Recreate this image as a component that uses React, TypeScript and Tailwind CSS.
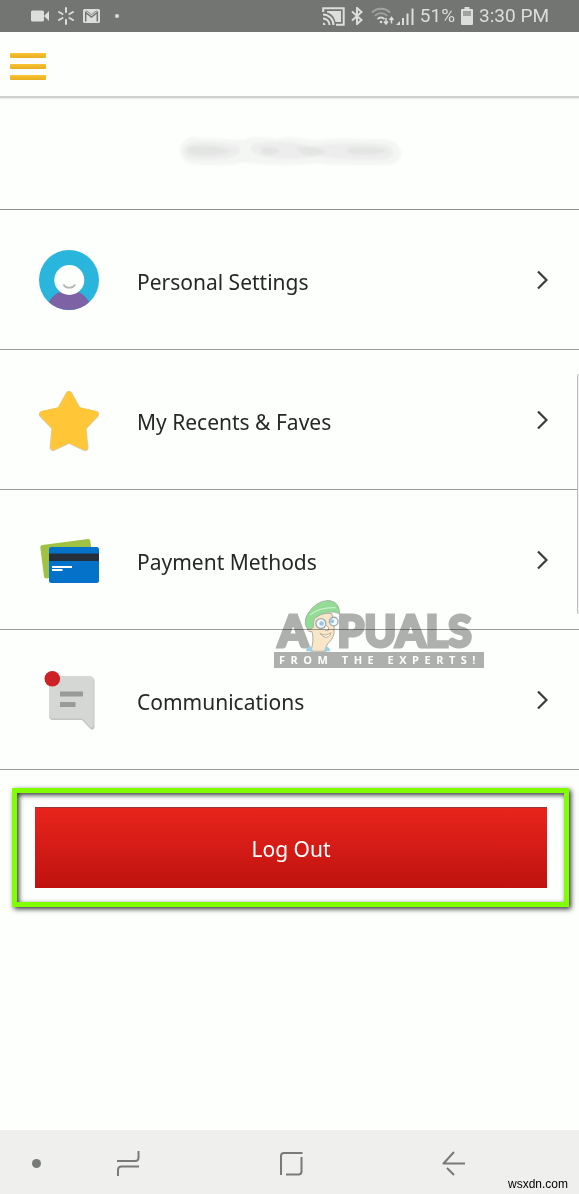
import type { ReactNode } from "react";

const ROWS: { label: string; icon: ReactNode }[] = [
  { label: "Personal Settings", icon: <AvatarIcon /> },
  { label: "My Recents & Faves", icon: <StarIcon /> },
  { label: "Payment Methods", icon: <CardsIcon /> },
  { label: "Communications", icon: <ChatIcon /> },
];

function AvatarIcon() {
  return (
    <svg viewBox="0 0 60 60" className="size-[60px] shrink-0" aria-hidden="true">
      <defs>
        <clipPath id="avatar">
          <circle cx="30" cy="30" r="30" />
        </clipPath>
      </defs>
      <circle cx="30" cy="30" r="30" fill="#29b5dc" />
      <path d="M8 56C12 46 20 40 30 40s18 6 22 16l-22 8z" fill="#7d62a5" clipPath="url(#avatar)" />
      <circle cx="30.3" cy="30" r="15" fill="#fdfffd" />
      <path d="M24.5 34.500c2 4.200 9.500 4.200 11.500 0" fill="none" stroke="#b4b6b5" strokeWidth="1.800" />
    </svg>
  );
}

function StarIcon() {
  return (
    <svg viewBox="0 0 60 60" className="size-[60px] shrink-0 overflow-visible" aria-hidden="true">
      <path
        d="M30 4.500L39 20.500L56.500 24.500L44 37.500L46 57.500L30 50L14 57.500L16 37.500L3.500 24.500L21 20.500z"
        fill="#d5cfae"
        stroke="#d5cfae"
        strokeWidth="7"
        strokeLinejoin="round"
      />
      <path
        d="M30 4.500L38.500 20L56.500 24L44 37.500L45.500 57L30 49.500L14.500 57L16 37.500L3.500 24L21.500 20z"
        fill="#ffc638"
        stroke="#ffc638"
        strokeWidth="6"
        strokeLinejoin="round"
      />
    </svg>
  );
}

function CardsIcon() {
  return (
    <svg viewBox="0 0 60 60" className="size-[60px] shrink-0" aria-hidden="true">
      <path d="M3.500 15L49 9Q51 8.800 51.300 11L55 40L7 48.500Q5.300 48.500 5 46.500L1.300 17.500Q1.200 15.300 3.500 15z" fill="#9fc243" />
      <rect x="10" y="17" width="50" height="36" rx="2.500" fill="#0572c9" />
      <rect x="10" y="23.500" width="50" height="7.500" fill="#26303a" />
      <path d="M13 37h20M13 40h10.500" stroke="#fff" strokeWidth="2" />
    </svg>
  );
}

function ChatIcon() {
  return (
    <svg viewBox="0 0 60 60" className="size-[60px] shrink-0" aria-hidden="true">
      <path d="M14 7h37q4.500 0 4.500 4.500V57q-.5 4-4 2L43 50H14q-4 0-4-4V11q0-4 4-4z" fill="#c2c4c2" />
      <path d="M14 6h36.500q4 0 4 4V55q-.5 4-3.500 2L43 48.500H14q-4 0-4-4V10q0-4 4-4z" fill="#d5d7d5" />
      <path d="M21 24h23M21 34.500h15.500" stroke="#999b99" strokeWidth="5" />
      <circle cx="13.300" cy="8.700" r="7.800" fill="#cd2127" />
    </svg>
  );
}

function StatusBar() {
  return (
    <div className="flex h-8 items-center justify-between bg-[#737572] pr-[30px] pl-[31px] text-[#dcdedb]">
      <div className="flex items-center gap-2">
        <svg viewBox="0 0 18 12" className="h-3 w-[18px]" fill="currentColor" aria-hidden="true">
          <rect y="0.500" width="13" height="11" rx="1.500" />
          <path d="M13 6l5-5v10z" />
        </svg>
        <svg viewBox="0 0 18 18" className="size-[18px]" fill="none" stroke="currentColor" strokeWidth="2" strokeLinecap="round" aria-hidden="true">
          <path d="M9 1v4M9 13v4M2 5l3.500 2M12.500 11l3.500 2M2 13l3.500-2M12.500 7L16 5" />
        </svg>
        <svg viewBox="0 0 17 14" className="h-3.5 w-[17px]" aria-hidden="true">
          <rect width="17" height="14" rx="1.500" fill="currentColor" />
          <path d="M2.700 12.500V3.500L8.500 8l5.800-4.500v9" fill="none" stroke="#737572" strokeWidth="1.500" />
          <path d="M3 1.500l5.500 4 5.500-4" fill="none" stroke="#737572" strokeWidth="0.800" />
        </svg>
        <span className="ml-[7px] size-1 rounded-full bg-current" />
      </div>
      <div className="flex items-center gap-1.5 font-[Roboto,sans-serif] text-[19px] leading-6">
        <svg viewBox="0 0 23 19" className="h-[19px] w-[23px]" aria-hidden="true">
          <path d="M1.200 5V1.200h20.500v16.500H14" fill="none" stroke="currentColor" strokeWidth="2" />
          <path d="M5 4h14v11h-5.500C12.500 10 9.500 6.500 5 5.500z" fill="currentColor" />
          <path d="M1 7.500A10.500 10.500 0 0 1 11.500 18M1 11.500A6.500 6.500 0 0 1 7.500 18" fill="none" stroke="currentColor" strokeWidth="2" />
          <path d="M1 15.500A2.500 2.500 0 0 1 3.500 18H1z" fill="currentColor" />
        </svg>
        <svg viewBox="0 0 12 18" className="h-[18px] w-3" fill="none" stroke="currentColor" strokeWidth="2" aria-hidden="true">
          <path d="M1 4.500l9.500 8.500L6 17V1l4.500 4L1 13.500" />
        </svg>
        <svg viewBox="0 0 23 18" className="ml-0.5 h-[18px] w-[23px]" fill="none" stroke="currentColor" strokeWidth="1.800" aria-hidden="true">
          <path d="M1 5.500C6 0.500 14 0.500 19 5.500M3.800 8.800C7.500 5.300 12.500 5.300 16.200 8.800" opacity="0.450" />
          <path d="M6.500 12C8.800 10 11.200 10 13.500 12" />
          <circle cx="10" cy="15" r="1.300" fill="currentColor" stroke="none" />
          <path d="M15 11v5M13 14.500l2 2.500 2-2.500M20.500 16.500v-5M18.500 13l2-2.500 2 2.500" strokeWidth="1.500" />
        </svg>
        <svg viewBox="0 0 18 17" className="-ml-1 h-[17px] w-[18px]" fill="currentColor" aria-hidden="true">
          <path d="M0 17l4-4v4zM6 10h2v7H6zM10.500 5.500h2V17h-2zM15.500 0.500h2V17h-2z" />
        </svg>
        <span>51%</span>
        <svg viewBox="0 0 12 18" className="h-[18px] w-3" fill="currentColor" aria-hidden="true">
          <path d="M3.500 0h5v2H11q1 0 1 1v14q0 1-1 1H1q-1 0-1-1V3q0-1 1-1h2.500z" />
          <rect x="2" y="4" width="8" height="5" fill="#a0a29f" />
        </svg>
        <time>3:30 PM</time>
      </div>
    </div>
  );
}

/** Redacted account name: soft grey smudges. */
function HiddenName() {
  return (
    <svg viewBox="0 0 224 32" className="h-8 w-56" aria-hidden="true">
      <defs>
        <filter id="smudge" x="-10%" y="-40%" width="120%" height="180%">
          <feGaussianBlur stdDeviation="1" />
        </filter>
      </defs>
      <g filter="url(#smudge)">
        <path d="M14 2C30 4 55 4 66 5C75 0 88 2 98 4C112 0 120 4 142 5C165 1 185 5 208 4C228 8 227 29 211 30H152C140 26 125 31 100 30C85 31 74 27 62 28C50 32 30 30 13 29C-3 24 -1 5 14 2z" fill="#f4f6f4" />
        <path d="M13 8C30 6 45 8 60 11C66 16 58 22 50 23C35 26 22 25 12 24C4 19 4 12 13 8zM78 8C95 6 115 7 135 11C160 8 185 7 208 10C218 14 217 21 208 24C190 26 165 25 142 21C120 25 100 25 82 21C70 17 70 11 78 8z" fill="#ecedec" />
        <path d="M11 12Q34 8 54 16Q40 22 16 20Q6 17 11 12zM82 13Q98 10 102 17Q94 22 84 19zM118 13Q142 10 148 17Q138 23 124 19zM168 14Q195 9 209 16Q196 22 172 19z" fill="#e3e5e3" />
      </g>
    </svg>
  );
}

function Watermark() {
  return (
    <div className="pointer-events-none absolute top-[501px] left-[274px] w-[210px] font-[Lato,sans-serif] text-[#b0b0b0] mix-blend-multiply">
      <div className="flex h-[53px] items-end pl-1">
        <span className="text-[43px] leading-[42px] font-black [-webkit-text-stroke:3px_#b0b0b0] [stroke-linejoin:round]">A</span>
        <svg viewBox="130 25 112 158" className="-mx-1 h-[53px] w-[37px] shrink-0" strokeLinejoin="round" aria-hidden="true">
          <path d="M158 85Q185 62 214 68Q224 95 221 128Q215 150 202 158Q195 168 197 182H150Q162 150 154 122Q138 126 140 104z" fill="#fbe6cb" stroke="#b5aca0" strokeWidth="3" />
          <path d="M134 98Q132 82 142 68Q165 30 205 28Q238 32 238 70Q225 60 205 64Q178 68 162 82Q157 95 158 110L146 116Q135 112 134 98z" fill="#93dc96" stroke="#a4b4a4" strokeWidth="3" />
          <path d="M148 72Q178 48 226 50" fill="none" stroke="#c8efca" strokeWidth="4" />
          <circle cx="181" cy="98" r="15" fill="#f4faff" stroke="#9fa9b2" strokeWidth="4" />
          <circle cx="220" cy="92" r="13" fill="#f4faff" stroke="#9fa9b2" strokeWidth="4" />
          <circle cx="183" cy="98" r="7" fill="#9dc3df" />
          <circle cx="215" cy="91" r="6" fill="#9dc3df" />
          <path d="M196 103Q208 108 204 118L194 120M178 128Q196 138 212 126Q206 144 190 138z" fill="#fff" stroke="#bda98f" strokeWidth="3" />
          <path d="M135 182Q140 166 152 168L158 182zM190 182L196 166Q208 170 210 182z" fill="#9fd0e4" />
        </svg>
        <span className="text-[43px] leading-[42px] font-black [-webkit-text-stroke:3px_#b0b0b0] [stroke-linejoin:round]">PUALS</span>
      </div>
      <p className="h-4 bg-[#b0b0b0] pl-[5px] font-['Open_Sans',sans-serif] text-[11px] leading-4 font-bold tracking-[0.5em] whitespace-nowrap text-white">
        FROM THE EXPERTS!
      </p>
    </div>
  );
}

function NavBar() {
  return (
    <nav className="relative mt-auto flex h-16 shrink-0 items-center bg-[#eff0ee] pt-0.5 pl-8 text-[#787a78]">
      <button aria-label="Pin bar" className="mr-[75px] flex h-7 w-[9px] items-center">
        <span className="size-[9px] rounded-full bg-current" />
      </button>
      <div className="flex flex-1 items-center justify-between pr-[113px]">
        <button aria-label="Recent apps">
          <svg viewBox="0 0 24 28" className="h-7 w-6" fill="none" stroke="currentColor" strokeWidth="2">
            <path d="M1 12h18q3.500 0 3.500-3.500V2M23 17.500H5.500Q2 17.500 2 21v6" />
          </svg>
        </button>
        <button aria-label="Home">
          <svg viewBox="0 0 24 28" className="h-7 w-6" fill="none" stroke="currentColor" strokeWidth="2">
            <path d="M23.500 4H5Q2 4 2 7v19M22.500 8v14.500q0 3-3 3H7" />
          </svg>
        </button>
        <button aria-label="Back">
          <svg viewBox="0 0 24 28" className="h-7 w-6" fill="none" stroke="currentColor" strokeWidth="2" strokeLinejoin="round">
            <path d="M12 3L1.500 14.500H23M5 19l7 7" />
          </svg>
        </button>
      </div>
      <span className="absolute right-[11px] bottom-0.5 font-['Liberation_Sans',sans-serif] text-[12px] leading-4 text-black">
        wsxdn.com
      </span>
    </nav>
  );
}

export default function App() {
  return (
    <div className="flex min-h-screen flex-col overflow-x-hidden bg-[#fdfffd] font-['Noto_Sans',sans-serif] text-[#262826]">
      <StatusBar />
      <header className="flex h-[66px] items-center border-b-2 border-[#cfd1cf] pl-2.5 shadow-[0_1px_1px_#ececec]">
        <button aria-label="Menu" className="mt-1 flex w-9 flex-col gap-1.5">
          <span className="h-[5px] rounded-[1px] bg-linear-to-b from-[#fcc433] to-[#e6ae1e]" />
          <span className="h-[5px] rounded-[1px] bg-linear-to-b from-[#fcc433] to-[#e6ae1e]" />
          <span className="h-[5px] rounded-[1px] bg-linear-to-b from-[#fcc433] to-[#e6ae1e]" />
        </button>
      </header>

      <main className="relative">
        <div className="flex h-28 items-center justify-center border-b border-[#8e908e] pb-1.5">
          <HiddenName />
        </div>
        <ul>
          {ROWS.map(({ label, icon }) => (
            <li key={label} className="border-b border-[#9b9d9b]">
              <button className="flex h-[139px] w-full items-center pr-[31px] pl-[39px] text-left">
                {icon}
                <span className="ml-[38px] flex-1 pt-1 text-[21px] leading-8">{label}</span>
                <svg viewBox="0 0 11 20" className="h-5 w-[11px]" fill="none" stroke="#3a3c3a" strokeWidth="2.200" aria-hidden="true">
                  <path d="M1 1.500L9.500 10L1 18.500" />
                </svg>
              </button>
            </li>
          ))}
        </ul>
        <div className="mt-[18px] mr-2.5 ml-3 border-[5px] border-[#80ff00] py-3.5 pr-[17px] pl-[18px] shadow-[2px_2px_5px_#333,inset_2px_2px_5px_#333]">
          <button className="block h-[81px] w-full border-t border-[#8f3c38] bg-linear-to-b from-[#e8241c] to-[#bf120f] pt-1 text-[21px] text-white">
            Log Out
          </button>
        </div>
        <Watermark />
        <div className="pointer-events-none absolute top-[276px] right-0 h-60 w-0.5 rounded-l-full border-l border-[#b9bbb9] bg-[#f2f2f2]" />
      </main>

      <NavBar />
    </div>
  );
}
